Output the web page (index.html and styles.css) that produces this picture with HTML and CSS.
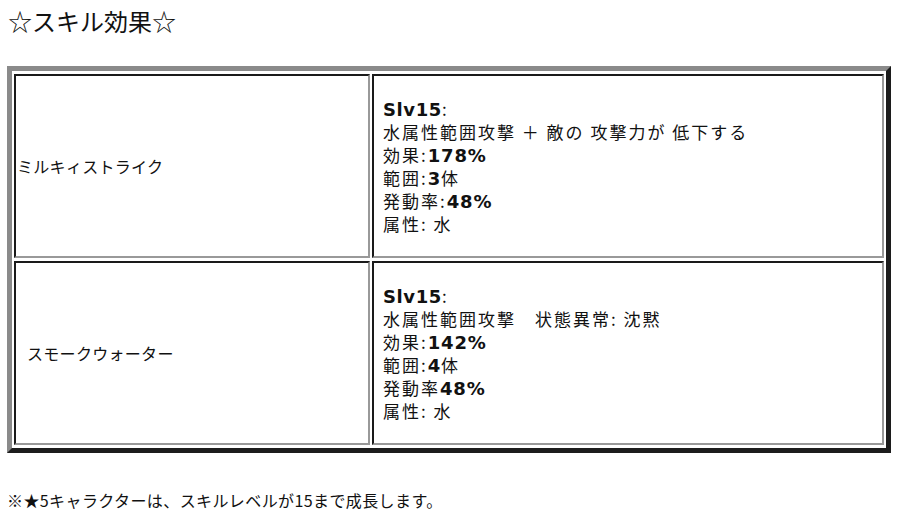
FILE: index.html
```html
<!DOCTYPE html>
<html lang="ja">
<head>
<meta charset="utf-8">
<link rel="stylesheet" href="styles.css">
</head>
<body>
<div class="page">
  <div class="title">☆スキル効果☆</div>
  <table class="skills">
    <tr>
      <td class="name">ミルキィストライク</td>
      <td class="detail">
        <div class="line"><b class="slv">Slv15</b>:</div>
        <div class="line">水属性範囲攻撃 ＋ 敵の 攻撃力が 低下する</div>
        <div class="line">効果:<b>178%</b></div>
        <div class="line">範囲:<b>3</b>体</div>
        <div class="line">発動率:<b>48%</b></div>
        <div class="line">属性: 水</div>
      </td>
    </tr>
    <tr>
      <td class="name name-indent">スモークウォーター</td>
      <td class="detail">
        <div class="line"><b class="slv">Slv15</b>:</div>
        <div class="line">水属性範囲攻撃　状態異常: 沈黙</div>
        <div class="line">効果:<b>142%</b></div>
        <div class="line">範囲:<b>4</b>体</div>
        <div class="line">発動率<b>48%</b></div>
        <div class="line">属性: 水</div>
      </td>
    </tr>
  </table>
  <div class="note">※★5キャラクターは、スキルレベルが15まで成長します。</div>
</div>
</body>
</html>
```

FILE: styles.css
```css
html, body {
  margin: 0;
  padding: 0;
  background: #ffffff;
}
body {
  font-family: "Noto Sans CJK JP", "DejaVu Sans", sans-serif;
  color: #111;
}
.page {
  padding: 0 9px 0 7px;
}
.title {
  font-size: 24px;
  line-height: 30px;
  margin-top: 6px;
  padding-left: 1px;
  font-weight: 400;
}
.skills {
  margin-top: 30px;
  width: 884px;
  border-collapse: separate;
  border-spacing: 2px 3px;
  border-style: solid;
  border-width: 5px;
  border-color: #8a8a8a #1c1c1c #1c1c1c #8a8a8a;
  font-size: 16px;
}
.skills td {
  box-sizing: border-box;
  height: 184px;
  border-style: solid;
  border-width: 2px;
  border-color: #1a1a1a #999999 #999999 #1a1a1a;
  vertical-align: middle;
  padding: 0;
}
.name {
  width: 356px;
  padding-left: 1px !important;
  line-height: 22px;
  letter-spacing: 0.3px;
}
.name-indent {
  padding-left: 11px !important;
}
.detail {
  padding-left: 9px !important;
  font-size: 17px;
  letter-spacing: 2px;
}
.line {
  line-height: 23px;
  height: 23px;
  white-space: nowrap;
}
.line b {
  font-family: "DejaVu Sans", sans-serif;
  font-weight: 700;
  font-size: 18px;
  letter-spacing: 0.8px;
}
.line b.slv {
  letter-spacing: 0.6px;
}
.note {
  margin-top: 36px;
  font-size: 16px;
  line-height: 22px;
  letter-spacing: 0.4px;
}
```
